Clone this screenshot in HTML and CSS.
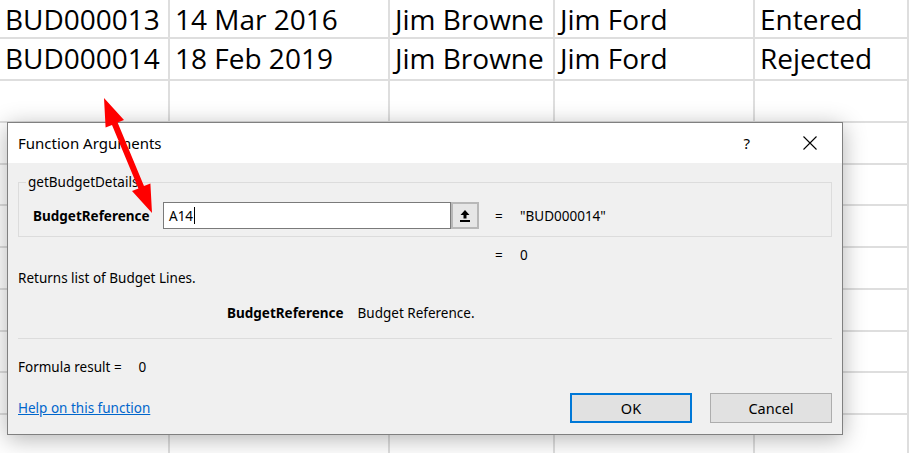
FILE: index.html
```html
<!DOCTYPE html>
<html lang="en">
<head>
    <meta charset="UTF-8">
    <meta name="viewport" content="width=device-width, initial-scale=1.0">
    <title>Function Arguments</title>
    <link rel="stylesheet" href="styles.css">
</head>
<body>
    <!-- Worksheet behind the dialog -->
    <div class="sheet">
        <div class="row">
            <div class="cell">BUD000013</div>
            <div class="cell">14 Mar 2016</div>
            <div class="cell">Jim Browne</div>
            <div class="cell">Jim Ford</div>
            <div class="cell">Entered</div>
        </div>
        <div class="row">
            <div class="cell">BUD000014</div>
            <div class="cell">18 Feb 2019</div>
            <div class="cell">Jim Browne</div>
            <div class="cell">Jim Ford</div>
            <div class="cell">Rejected</div>
        </div>
        <div class="row"><div class="cell"></div><div class="cell"></div><div class="cell"></div><div class="cell"></div><div class="cell"></div></div>
        <div class="row"><div class="cell"></div><div class="cell"></div><div class="cell"></div><div class="cell"></div><div class="cell"></div></div>
        <div class="row"><div class="cell"></div><div class="cell"></div><div class="cell"></div><div class="cell"></div><div class="cell"></div></div>
        <div class="row"><div class="cell"></div><div class="cell"></div><div class="cell"></div><div class="cell"></div><div class="cell"></div></div>
        <div class="row"><div class="cell"></div><div class="cell"></div><div class="cell"></div><div class="cell"></div><div class="cell"></div></div>
        <div class="row"><div class="cell"></div><div class="cell"></div><div class="cell"></div><div class="cell"></div><div class="cell"></div></div>
        <div class="row"><div class="cell"></div><div class="cell"></div><div class="cell"></div><div class="cell"></div><div class="cell"></div></div>
        <div class="row"><div class="cell"></div><div class="cell"></div><div class="cell"></div><div class="cell"></div><div class="cell"></div></div>
        <div class="row"><div class="cell"></div><div class="cell"></div><div class="cell"></div><div class="cell"></div><div class="cell"></div></div>
    </div>

    <!-- Function Arguments dialog -->
    <div class="dialog">
        <div class="dialog-title">
            <span class="title-text">Function Arguments</span>
            <span class="help-btn">?</span>
            <svg class="close-btn" viewBox="0 0 14 14">
                <path d="M0.5 0.5 L13.5 13.5 M13.5 0.5 L0.5 13.5" stroke="#000" stroke-width="1.1" fill="none"/>
            </svg>
        </div>
        <div class="dialog-body">
            <fieldset class="func-group">
                <legend>getBudgetDetails</legend>
                <div class="arg-row">
                    <label class="arg-name">BudgetReference</label>
                    <div class="arg-input">A14<span class="caret"></span></div>
                    <button class="ref-btn">
                        <svg viewBox="0 0 10 12" width="10" height="12">
                            <path d="M5 0 L9.5 5 L6.5 5 L6.5 8.5 L3.5 8.5 L3.5 5 L0.5 5 Z" fill="#000"/>
                            <rect x="0" y="10" width="10" height="2" fill="#000"/>
                        </svg>
                    </button>
                    <span class="arg-eq">=</span>
                    <span class="arg-value">"BUD000014"</span>
                </div>
            </fieldset>
            <div class="result-row"><span class="arg-eq">=</span><span>0</span></div>
            <p class="func-desc">Returns list of Budget Lines.</p>
            <div class="arg-help">
                <b>BudgetReference</b>
                <span>Budget Reference.</span>
            </div>
            <hr>
            <div class="formula-result">Formula result =<span>0</span></div>
            <div class="dialog-footer">
                <a href="#">Help on this function</a>
                <button class="btn btn-ok">OK</button>
                <button class="btn">Cancel</button>
            </div>
        </div>
    </div>

    <!-- red double arrow drawn over the screenshot -->
    <svg class="annotation" viewBox="0 0 909 453">
        <polygon fill="#ff0000" points="104,98 124,120 117.6,122.6 144,186 150.4,183.4 152,213 132,191 138.4,188.4 112,125 105.6,127.6"/>
    </svg>
</body>
</html>
```

FILE: styles.css
```css
body {
    margin: 0;
    width: 909px;
    height: 453px;
    overflow: hidden;
    position: relative;
    background-color: #fff;
    font-family: "Noto Sans", "Open Sans", sans-serif;
}

/* worksheet */
.sheet {
    font-family: "Open Sans", "Noto Sans", sans-serif;
    font-size: 28px;
    color: #000;
}

.row {
    display: grid;
    grid-template-columns: 170px 220px 165px 200px 1fr;
    height: 41.75px;
    box-sizing: border-box;
    border-bottom: 2px solid #dedede;
}

/* top row is partly scrolled off */
.row:first-child {
    height: 39.25px;
}

.cell {
    border-right: 2px solid #dedede;
    padding: 0 5px 0 5px;
    line-height: 39.75px;
    white-space: nowrap;
}

.row:first-child .cell {
    line-height: 38px;
}

/* dialog */
.dialog {
    position: absolute;
    left: 7px;
    top: 122px;
    width: 836px;
    height: 313px;
    box-sizing: border-box;
    border: 1px solid #808080;
    background-color: #f0f0f0;
    box-shadow: 0 4px 22px rgba(0, 0, 0, 0.3);
    font-size: 13.5px;
    color: #000;
}

.dialog-title {
    height: 40px;
    background-color: #fff;
    display: flex;
    align-items: center;
    padding: 0 25px 0 10px;
    font-size: 15px;
}

.title-text {
    flex: 1;
}

.help-btn {
    margin-right: 53px;
}

.close-btn {
    width: 14px;
    height: 14px;
}

.dialog-body {
    padding: 10px 10px 0 10px;
}

.func-group {
    margin: 0;
    padding: 11px 14px 7px;
    border: 1px solid #dcdcdc;
    min-width: 0;
}

.func-group legend {
    padding: 0 2px;
    margin-left: -7px;
    line-height: 18px;
}

.arg-row {
    display: flex;
    align-items: center;
    height: 27px;
}

.arg-name {
    width: 130px;
    font-weight: bold;
}

.arg-input {
    width: 288px;
    height: 27px;
    box-sizing: border-box;
    border: 1px solid #7a7a7a;
    background-color: #fff;
    padding-left: 5px;
    display: flex;
    align-items: center;
}

.caret {
    width: 1px;
    height: 17px;
    background-color: #000;
    margin-left: 1px;
}

.ref-btn {
    width: 28px;
    height: 27px;
    padding: 0;
    border: 2px solid #b8b8b8;
    background-color: #e6e6e6;
    display: flex;
    align-items: center;
    justify-content: center;
}

.arg-eq {
    margin-left: 16px;
    width: 25px;
}

.result-row {
    margin-top: 9px;
    padding-left: 477px;
    line-height: 18px;
    display: flex;
}

.result-row .arg-eq {
    margin-left: 0;
}

.func-desc {
    margin: 5px 0 0;
    line-height: 18px;
}

.arg-help {
    margin-top: 17px;
    padding-left: 209px;
    display: flex;
    gap: 14px;
    line-height: 18px;
}

.dialog-body hr {
    margin: 16px 0 0;
    border: 0;
    border-top: 1px solid #dcdcdc;
}

.formula-result {
    margin-top: 19px;
    line-height: 18px;
}

.formula-result span {
    margin-left: 17px;
}

.dialog-footer {
    margin-top: 17px;
    display: flex;
    align-items: center;
}

.dialog-footer a {
    margin-right: auto;
    color: #0066cc;
}

.btn {
    width: 122px;
    height: 30px;
    margin-left: 18px;
    background-color: #e1e1e1;
    border: 1px solid #adadad;
    font: inherit;
    font-size: 14.5px;
    color: #000;
}

.btn-ok {
    border: 2px solid #0078d7;
}

.annotation {
    position: absolute;
    left: 0;
    top: 0;
    width: 909px;
    height: 453px;
    pointer-events: none;
}
```
